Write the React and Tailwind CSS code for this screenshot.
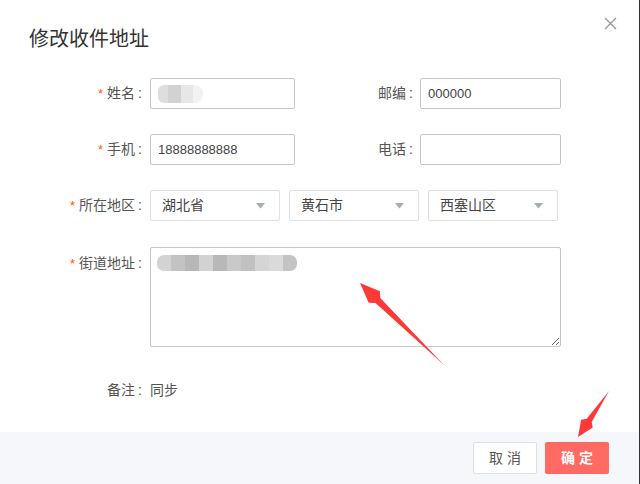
import React from 'react';

const font = { fontFamily: '"Liberation Sans", "Noto Sans CJK SC", sans-serif' };

function Label({ text, required, className = '' }) {
  return (
    <div className={`shrink-0 text-right text-[14px] text-[#555] whitespace-nowrap ${className}`}>
      {required && <span className="text-[#ff5a00] mr-1 text-[13px]">*</span>}
      {text}
      <span className="ml-[3px]">:</span>
    </div>
  );
}

function TextBox({ value, width, children }) {
  return (
    <div className={`h-[31px] ${width} border border-[#c6c6c6] rounded-[2px] bg-white flex items-center px-[7px] text-[13px] text-[#444]`}>
      {value}
      {children}
    </div>
  );
}

function Select({ value, width }) {
  return (
    <div className={`h-[31px] ${width} border border-[#dcdfe6] rounded-[2px] bg-white flex items-center justify-between pl-[11px] pr-[14px] text-[14px] text-[#444]`}>
      <span>{value}</span>
      <svg width="9" height="6" viewBox="0 0 9 6">
        <path d="M0 0H9L4.5 5.5Z" fill="#a6adba" />
      </svg>
    </div>
  );
}

function Blur({ shades }) {
  return (
    <div className="flex h-[16px] rounded-[7px] overflow-hidden">
      {shades.map((c, i) => (
        <div key={i} className="w-[14px] h-full" style={{ background: c }} />
      ))}
    </div>
  );
}

export default function App() {
  return (
    <div className="relative w-[640px] h-[484px] bg-white border-r border-[#333] overflow-hidden" style={font}>
      <div className="flex items-start justify-between pl-[29px] pr-[22px] pt-[25px]">
        <h1 className="text-[20px] leading-[28px] text-[#333] font-normal">修改收件地址</h1>
        <svg width="13" height="13" viewBox="0 0 13 13" className="mt-[-8px]">
          <path d="M1 1L12 12M12 1L1 12" stroke="#999" strokeWidth="1.4" />
        </svg>
      </div>

      <div className="flex flex-col pt-[25px]">
        <div className="flex items-center h-[31px]">
          <Label text="姓名" required className="w-[143px] pr-[1px]" />
          <div className="w-[7px]" />
          <TextBox width="w-[145px]">
            <div className="flex h-[18px] opacity-80">
              <div className="w-[10px] h-full bg-[#d6d6d6] rounded-l-[6px]" />
              <div className="w-[13px] h-full bg-[#c7c7c7]" />
              <div className="w-[12px] h-full bg-[#e2e2e3]" />
              <div className="w-[10px] h-full bg-[#f0f0f0] rounded-r-[8px]" />
            </div>
          </TextBox>
          <Label text="邮编" className="w-[118px]" />
          <div className="w-[7px]" />
          <TextBox value="000000" width="w-[141px]" />
        </div>

        <div className="flex items-center h-[31px] mt-[25px]">
          <Label text="手机" required className="w-[143px] pr-[1px]" />
          <div className="w-[7px]" />
          <TextBox value="18888888888" width="w-[145px]" />
          <Label text="电话" className="w-[118px]" />
          <div className="w-[7px]" />
          <TextBox width="w-[141px]" />
        </div>

        <div className="flex items-center h-[31px] mt-[25px]">
          <Label text="所在地区" required className="w-[143px] pr-[1px]" />
          <div className="w-[7px]" />
          <div className="flex gap-[9px]">
            <Select value="湖北省" width="w-[130px]" />
            <Select value="黄石市" width="w-[130px]" />
            <Select value="西塞山区" width="w-[130px]" />
          </div>
        </div>

        <div className="flex items-start mt-[26px]">
          <Label text="街道地址" required className="w-[143px] pr-[1px] pt-[6px]" />
          <div className="w-[7px]" />
          <div className="relative w-[411px] h-[100px]">
            <textarea
              className="w-full h-full border border-[#c6c6c6] rounded-[2px] resize outline-none bg-white"
              readOnly
            />
            <div className="absolute left-[7px] top-[8px]">
              <Blur shades={['#d3d3d4', '#c3c3c4', '#b7b7b8', '#d2d2d3', '#b8b8b9', '#c9c9ca', '#c1c1c2', '#d5d5d6', '#dadadb', '#c4c4c5']} />
            </div>
          </div>
        </div>

        <div className="flex items-center mt-[33px] text-[14px] text-[#555]">
          <div className="w-[143px] text-right pr-[1px]">备注<span className="ml-[3px]">:</span></div>
          <div className="w-[7px]" />
          <div>同步</div>
        </div>
      </div>

      <div className="absolute left-0 right-0 bottom-0 h-[52px] bg-[#f6f7fb] flex items-center justify-end gap-[8px] pr-[30px]">
        <button className="w-[64px] h-[32px] bg-white border border-[#dcdfe6] rounded-[2px] text-[14px] text-[#555] tracking-[4px] pl-[4px]">
          取消
        </button>
        <button className="w-[64px] h-[32px] bg-[#ff6b62] rounded-[2px] text-[14px] text-white font-bold tracking-[4px] pl-[4px]">
          确定
        </button>
      </div>

      <svg className="absolute left-0 top-0 pointer-events-none" width="640" height="484">
        <polygon points="360,283 379.9,291.3 380.3,298 444,365 375.5,303 368.7,302.7" fill="#ff3838" />
        <polygon points="578,437 592.7,427.6 591.7,422.1 609,391 586.7,418.7 581.1,419.8" fill="#ff3838" />
      </svg>
    </div>
  );
}
